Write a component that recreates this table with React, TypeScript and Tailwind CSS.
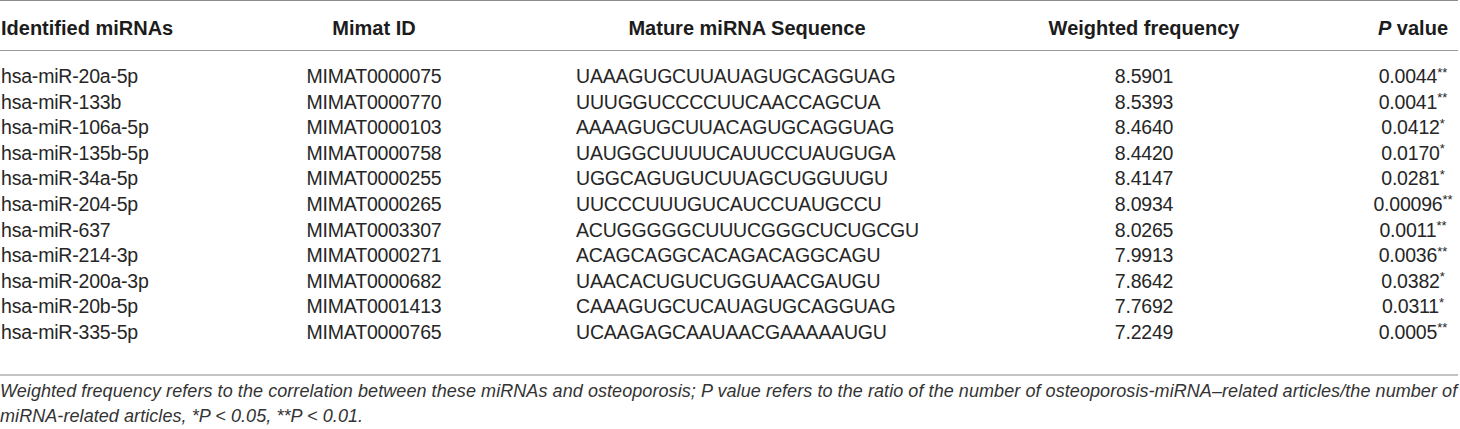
import React from "react";

const rows: [string, string, string, string, string, string][] = [
  ["hsa-miR-20a-5p", "MIMAT0000075", "UAAAGUGCUUAUAGUGCAGGUAG", "8.5901", "0.0044", "**"],
  ["hsa-miR-133b", "MIMAT0000770", "UUUGGUCCCCUUCAACCAGCUA", "8.5393", "0.0041", "**"],
  ["hsa-miR-106a-5p", "MIMAT0000103", "AAAAGUGCUUACAGUGCAGGUAG", "8.4640", "0.0412", "*"],
  ["hsa-miR-135b-5p", "MIMAT0000758", "UAUGGCUUUUCAUUCCUAUGUGA", "8.4420", "0.0170", "*"],
  ["hsa-miR-34a-5p", "MIMAT0000255", "UGGCAGUGUCUUAGCUGGUUGU", "8.4147", "0.0281", "*"],
  ["hsa-miR-204-5p", "MIMAT0000265", "UUCCCUUUGUCAUCCUAUGCCU", "8.0934", "0.00096", "**"],
  ["hsa-miR-637", "MIMAT0003307", "ACUGGGGGCUUUCGGGCUCUGCGU", "8.0265", "0.0011", "**"],
  ["hsa-miR-214-3p", "MIMAT0000271", "ACAGCAGGCACAGACAGGCAGU", "7.9913", "0.0036", "**"],
  ["hsa-miR-200a-3p", "MIMAT0000682", "UAACACUGUCUGGUAACGAUGU", "7.8642", "0.0382", "*"],
  ["hsa-miR-20b-5p", "MIMAT0001413", "CAAAGUGCUCAUAGUGCAGGUAG", "7.7692", "0.0311", "*"],
  ["hsa-miR-335-5p", "MIMAT0000765", "UCAAGAGCAAUAACGAAAAAUGU", "7.2249", "0.0005", "**"],
];

const cols = "grid grid-cols-[240px_268px_478px_380px_94px]";

export default function App() {
  return (
    <div
      className="w-[1460px] h-[429px] bg-white overflow-hidden text-[#262626]"
      style={{ fontFamily: '"Liberation Sans", Arial, Helvetica, sans-serif' }}
    >
      <div className="w-[1458px] border-t border-[#8c8c8c]">
        <div className={`${cols} h-[50px] items-center border-b border-[#9a9a9a] text-[20px] font-bold text-[#1c1c1c] pt-[5px]`}>
          <div className="pl-[1px]">Identified miRNAs</div>
          <div className="text-center">Mimat ID</div>
          <div className="text-center">Mature miRNA Sequence</div>
          <div className="text-center pr-[64px]">Weighted frequency</div>
          <div className="text-center">
            <span className="italic">P</span> value
          </div>
        </div>
        <div className="pt-[13px] pb-[28px] text-[19.5px] leading-[25.6px] tracking-[-0.2px] border-b-2 border-[#c4c4c4]">
          {rows.map((r) => (
            <div key={r[0]} className={cols}>
              <div className="pl-[1px]">{r[0]}</div>
              <div className="text-center">{r[1]}</div>
              <div className="pl-[68px]">{r[2]}</div>
              <div className="text-center pr-[64px]">{r[3]}</div>
              <div className="text-center whitespace-nowrap">
                {r[4]}
                <sup className="text-[13px] tracking-[0px]">{r[5]}</sup>
              </div>
            </div>
          ))}
        </div>
      </div>
      <div className="pt-[3px] italic text-[18px] leading-[25px] tracking-[0.07px] text-[#333] whitespace-nowrap">
        Weighted frequency refers to the correlation between these miRNAs and osteoporosis;{" "}
        <span>P</span> value refers to the ratio of the number of osteoporosis-miRNA–related articles/the number of
        <br />
        miRNA-related articles, *<span>P</span> &lt; 0.05, **<span>P</span> &lt; 0.01.
      </div>
    </div>
  );
}
